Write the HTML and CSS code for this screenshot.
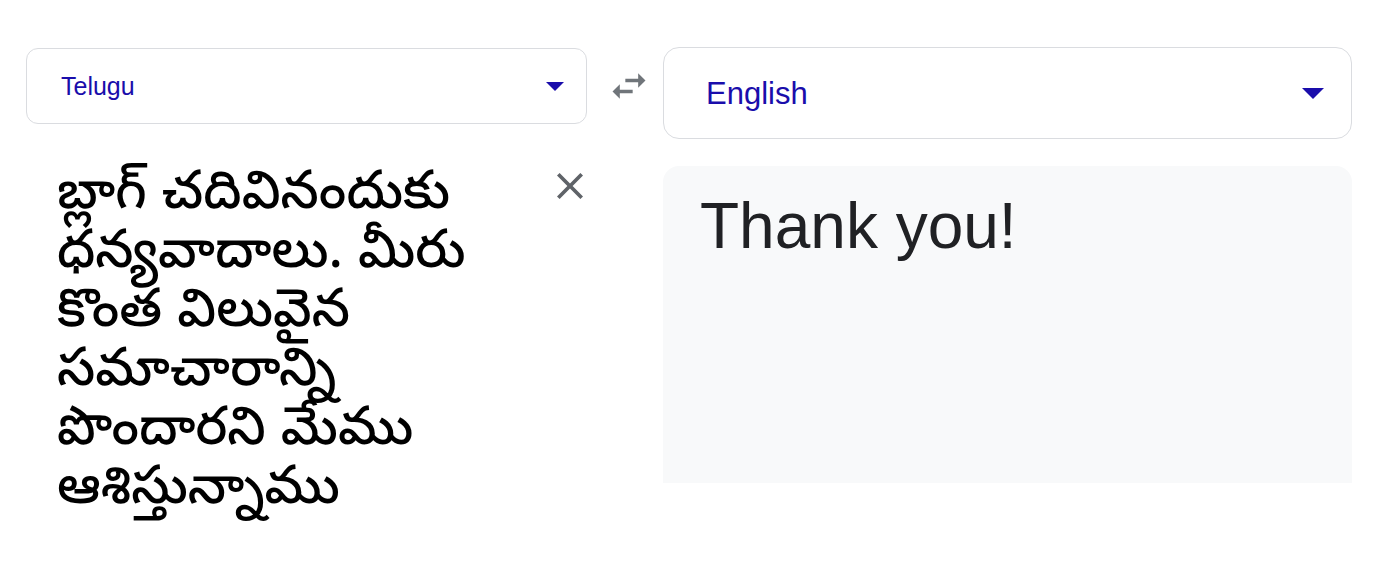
FILE: index.html
```html
<!DOCTYPE html>
<html lang="te">
<head>
<meta charset="utf-8">
<link rel="stylesheet" href="styles.css">
</head>
<body>
<div class="translator">
  <div class="col col-source">
    <div class="lang-select lang-select-source">
      <span class="lang-name">Telugu</span>
      <svg class="caret" width="18" height="9" viewBox="0 0 18 9"><path d="M0 0h18L9 9z" fill="#1a0dab"/></svg>
    </div>
    <div class="source-area">
      <div class="source-text">బ్లాగ్ చదివినందుకు<br>ధన్యవాదాలు. మీరు<br>కొంత విలువైన<br>సమాచారాన్ని<br>పొందారని మేము<br>ఆశిస్తున్నాము</div>
      <svg class="clear" width="26" height="26" viewBox="5 5 14 14"><path d="M19 6.41L17.59 5 12 10.59 6.41 5 5 6.41 10.59 12 5 17.59 6.41 19 12 13.41 17.59 19 19 17.59 13.41 12z" fill="#5f6368"/></svg>
    </div>
  </div>
  <div class="swap">
    <svg width="44" height="44" viewBox="0 0 24 24"><path d="M6.99 11L3 15l3.99 4v-3H14v-2H6.99v-3zM21 9l-4-4v3h-7v2h7v3l4-4z" fill="#70757a"/></svg>
  </div>
  <div class="col col-target">
    <div class="lang-select lang-select-target">
      <span class="lang-name">English</span>
      <svg class="caret" width="22" height="11" viewBox="0 0 22 11"><path d="M0 0h22L11 11z" fill="#1a0dab"/></svg>
    </div>
    <div class="target-panel">
      <div class="target-text">Thank you!</div>
    </div>
  </div>
</div>
</body>
</html>
```
FILE: styles.css
```css
html, body {
  margin: 0;
  padding: 0;
  background: #fff;
}
body {
  font-family: "Liberation Sans", Arial, sans-serif;
  width: 1374px;
  height: 570px;
  overflow: hidden;
}
.translator {
  display: flex;
  padding: 47px 0 0 26px;
}
.col-source {
  width: 561px;
  display: flex;
  flex-direction: column;
}
.col-target {
  width: 689px;
  display: flex;
  flex-direction: column;
}
.swap {
  width: 76px;
  padding-top: 17px;
  padding-left: 20px;
  box-sizing: border-box;
}
.swap svg { display: block; }
.lang-select {
  box-sizing: border-box;
  border: 1px solid #dadce0;
  display: flex;
  align-items: center;
  justify-content: space-between;
  color: #1a0dab;
}
.lang-select-source {
  margin-top: 1px;
  height: 76px;
  border-radius: 12px;
  padding: 0 22px 0 34px;
  font-size: 25px;
}
.lang-select-target {
  height: 92px;
  border-radius: 16px;
  padding: 0 27px 0 42px;
  font-size: 31px;
}
.lang-name { line-height: 1; }
.caret { display: block; }
.source-area {
  display: flex;
  justify-content: space-between;
  align-items: flex-start;
  padding: 0 4px 0 31px;
}
.source-text {
  margin-top: 45px;
  white-space: nowrap;
  font-family: "Noto Sans Telugu", "Noto Sans", sans-serif;
  font-size: 53px;
  font-weight: 500;
  line-height: 59px;
  color: #000;
}
.clear {
  display: block;
  margin-top: 49px;
}
.target-panel {
  margin-top: 27px;
  height: 317px;
  background: #f8f9fa;
  border-radius: 16px 16px 0 0;
  padding: 22px 37px 0;
  box-sizing: border-box;
}
.target-text {
  font-size: 64px;
  line-height: 77px;
  color: #202124;
}
```
